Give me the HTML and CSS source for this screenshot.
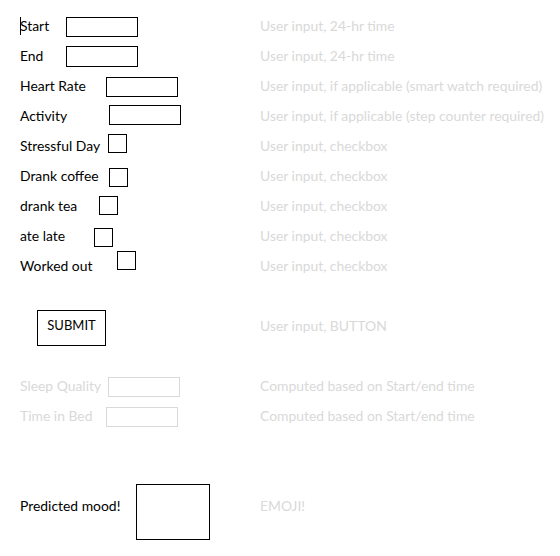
FILE: index.html
```html
<!DOCTYPE html>
<html>
<head>
<meta charset="utf-8">
<link rel="stylesheet" href="styles.css">
</head>
<body>
<div class="page">
  <div class="row">
    <div class="left"><span class="label caret">Start</span><span class="box field b-start"></span></div>
    <div class="desc">User input, 24-hr time</div>
  </div>
  <div class="row">
    <div class="left"><span class="label">End</span><span class="box field b-end"></span></div>
    <div class="desc">User input, 24-hr time</div>
  </div>
  <div class="row">
    <div class="left"><span class="label">Heart Rate</span><span class="box field b-heart"></span></div>
    <div class="desc">User input, if applicable (smart watch required)</div>
  </div>
  <div class="row">
    <div class="left"><span class="label">Activity</span><span class="box field b-activity"></span></div>
    <div class="desc">User input, if applicable (step counter required)</div>
  </div>
  <div class="row">
    <div class="left"><span class="label">Stressful Day</span><span class="box check c-stress"></span></div>
    <div class="desc">User input, checkbox</div>
  </div>
  <div class="row">
    <div class="left"><span class="label">Drank coffee</span><span class="box check c-coffee"></span></div>
    <div class="desc">User input, checkbox</div>
  </div>
  <div class="row">
    <div class="left"><span class="label">drank tea</span><span class="box check c-tea"></span></div>
    <div class="desc">User input, checkbox</div>
  </div>
  <div class="row">
    <div class="left"><span class="label">ate late</span><span class="box check c-late"></span></div>
    <div class="desc">User input, checkbox</div>
  </div>
  <div class="row">
    <div class="left"><span class="label">Worked out</span><span class="box check c-worked"></span></div>
    <div class="desc">User input, checkbox</div>
  </div>
  <div class="row row-submit">
    <div class="left"><span class="submit">SUBMIT</span></div>
    <div class="desc">User input, BUTTON</div>
  </div>
  <div class="row row-sleep">
    <div class="left"><span class="label muted">Sleep Quality</span><span class="box field light b-sleep"></span></div>
    <div class="desc">Computed based on Start/end time</div>
  </div>
  <div class="row">
    <div class="left"><span class="label muted">Time in Bed</span><span class="box field light b-bed"></span></div>
    <div class="desc">Computed based on Start/end time</div>
  </div>
  <div class="row row-mood">
    <div class="left"><span class="label">Predicted mood!</span><span class="mood"></span></div>
    <div class="desc">EMOJI!</div>
  </div>
</div>
</body>
</html>
```

FILE: styles.css
```css
html, body {
  margin: 0;
  padding: 0;
  background: #ffffff;
}
body {
  font-family: Lato, "Open Sans", sans-serif;
  font-size: 13.9px;
  color: #000000;
}
.page {
  padding: 11px 0 0 20px;
}
.row {
  display: flex;
  align-items: center;
  height: 30px;
}
.left {
  width: 240px;
  height: 100%;
  display: flex;
  align-items: center;
  flex-shrink: 0;
}
.label {
  line-height: 30px;
  white-space: nowrap;
}
.caret {
  position: relative;
}
.caret::before {
  content: "";
  position: absolute;
  left: 0;
  top: 6px;
  width: 1px;
  height: 18px;
  background: #000;
}
.muted {
  color: #d9d9d9;
}
.desc {
  color: #d9d9d9;
  line-height: 30px;
  white-space: nowrap;
}
.box {
  box-sizing: border-box;
  border: 1px solid #000;
  display: block;
  flex-shrink: 0;
}
.field {
  width: 72px;
  height: 20px;
}
.light {
  border-color: #d9d9d9;
}
.check {
  width: 19px;
  height: 19px;
}
.b-start { margin-left: auto; margin-right: 122px; margin-top: 1px; }
.b-end { margin-left: auto; margin-right: 122px; height: 21px; margin-top: 1px; }
.b-heart { margin-left: auto; margin-right: 82px; margin-top: 2px; }
.b-activity { margin-left: auto; margin-right: 79px; margin-top: -2px; }
.c-stress { margin-left: auto; margin-right: 133px; margin-top: -6px; }
.c-coffee { margin-left: auto; margin-right: 132px; margin-top: 2px; }
.c-tea { margin-left: auto; margin-right: 142px; margin-top: -1px; }
.c-late { margin-left: auto; margin-right: 147px; margin-top: 2px; }
.c-worked { margin-left: auto; margin-right: 124px; margin-top: -11px; }
.b-sleep { margin-left: auto; margin-right: 80px; margin-top: 2px; }
.b-bed { margin-left: auto; margin-right: 82px; margin-top: 2px; }

.row-submit {
  height: 60px;
  margin-top: 15px;
}
.submit {
  box-sizing: border-box;
  display: flex;
  align-items: center;
  justify-content: center;
  width: 69px;
  height: 36px;
  margin-left: 17px;
  margin-top: 3px;
  border: 1px solid #000;
  padding-bottom: 6px;
  font-size: 13px;
}
.row-sleep {
  margin-top: 15px;
}
.row-mood {
  margin-top: 53px;
  height: 56px;
  align-items: flex-start;
}
.row-mood .left {
  align-items: flex-start;
}
.row-mood .label,
.row-mood .desc {
  margin-top: 7px;
}
.mood {
  box-sizing: border-box;
  display: block;
  width: 74px;
  height: 56px;
  border: 1px solid #000;
  margin-left: auto;
  margin-right: 50px;
}
```
